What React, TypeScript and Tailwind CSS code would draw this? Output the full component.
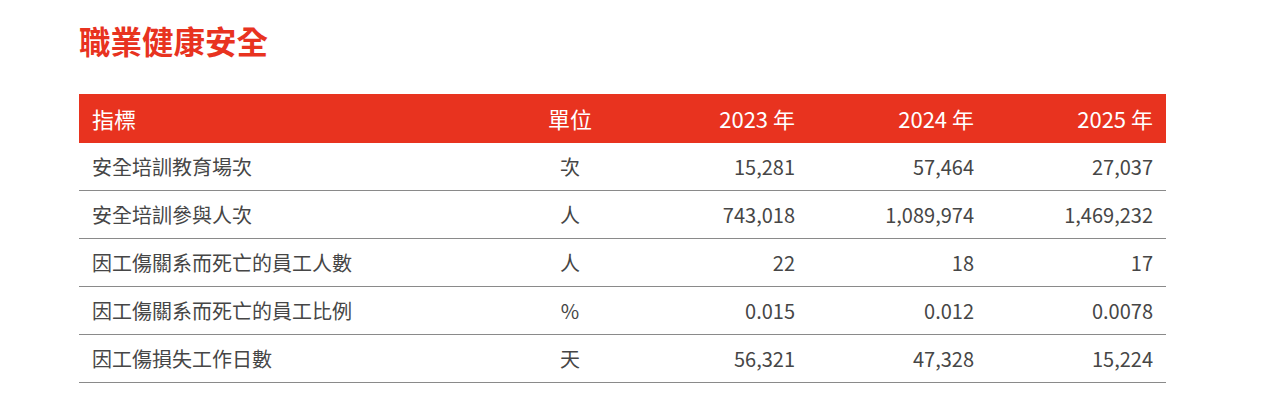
import React from 'react';

type Row = {
  label: string;
  unit: string;
  values: [string, string, string];
};

const rows: Row[] = [
  { label: '安全培訓教育場次', unit: '次', values: ['15,281', '57,464', '27,037'] },
  { label: '安全培訓參與人次', unit: '人', values: ['743,018', '1,089,974', '1,469,232'] },
  { label: '因工傷關系而死亡的員工人數', unit: '人', values: ['22', '18', '17'] },
  { label: '因工傷關系而死亡的員工比例', unit: '%', values: ['0.015', '0.012', '0.0078'] },
  { label: '因工傷損失工作日數', unit: '天', values: ['56,321', '47,328', '15,224'] },
];

const years = ['2023 年', '2024 年', '2025 年'];

const font = { fontFamily: '"Noto Sans CJK TC", "Noto Sans CJK SC", sans-serif' };

const App: React.FC = () => {
  return (
    <div className="w-[1270px] h-[416px] bg-white px-[79px] pt-[20px]" style={font}>
      <h1 className="text-[31.5px] leading-[40px] font-bold text-[#e8331f]">職業健康安全</h1>

      <div className="mt-[34px] w-[1087px]">
        <div className="grid grid-cols-[451px_80px_198px_179px_179px] h-[49px] items-center bg-[#e8331f] text-white text-[22px]">
          <div className="pl-[13px]">指標</div>
          <div className="text-center">單位</div>
          {years.map(y => (
            <div key={y} className="text-right pr-[13px]">{y}</div>
          ))}
        </div>

        {rows.map(r => (
          <div
            key={r.label}
            className="grid grid-cols-[451px_80px_198px_179px_179px] h-[48px] items-center border-b-[1.5px] border-[#8a8a8a] text-[20px] text-[#464646]"
          >
            <div className="pl-[13px]">{r.label}</div>
            <div className="text-center">{r.unit}</div>
            {r.values.map((v, i) => (
              <div key={i} className="text-right pr-[13px]">{v}</div>
            ))}
          </div>
        ))}
      </div>
    </div>
  );
};

export default App;
